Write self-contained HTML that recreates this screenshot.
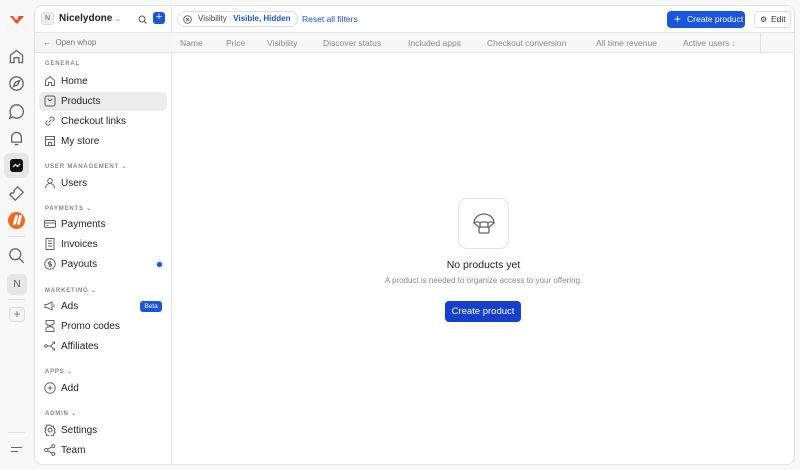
<!DOCTYPE html><html><head><style>
*{box-sizing:border-box;margin:0;padding:0}
body{width:800px;height:470px;background:#f8f8f8;font-family:"Liberation Sans",sans-serif;position:relative;overflow:hidden;color:#222}
.abs{position:absolute}
.rail svg{position:absolute;left:8px}
.panel{position:absolute;left:34px;top:5px;width:761px;height:460px;background:#fff;border:1px solid #e4e4e4;border-radius:8px;overflow:hidden}
.side{position:absolute;left:0;top:0;width:137px;height:100%;border-right:1px solid #e4e4e4}
.sec{position:absolute;left:10px;font-size:6px;letter-spacing:.8px;color:#888;font-weight:bold}
.it{position:absolute;left:4px;width:128px;height:19px;border-radius:5px;font-size:10px;color:#222;line-height:19px;padding-left:22px}
.it svg{position:absolute;left:5px;top:3px}
.col{position:absolute;font-size:8.5px;color:#888}
</style></head><body>
<div class="rail">
<svg style="top:13px;left:8px" width="17" height="12" viewBox="0 0 17 12"><path d="M1 3l4 0 3 4 3-4 5 0-7 8z" fill="#f24a1c"/><path d="M1 3l4 4M6 3l4 4" stroke="#fff" stroke-width="1"/></svg>
<svg style="top:48px" width="17" height="17" viewBox="0 0 14 14" fill="none" stroke="#666" stroke-width="1.1"><path d="M2 6l5-4 5 4v6H9V8H5v4H2z"/></svg>
<svg style="top:75px" width="17" height="17" viewBox="0 0 14 14" fill="none" stroke="#666" stroke-width="1.1"><circle cx="7" cy="7" r="5.5"/><path d="M9.5 4.5L8 8 4.5 9.5 6 6z"/></svg>
<svg style="top:103px" width="17" height="17" viewBox="0 0 14 14" fill="none" stroke="#666" stroke-width="1.1"><path d="M7 1.5a5.5 5.5 0 1 1-3 10L1.5 12.5l1-2.7A5.5 5.5 0 0 1 7 1.5z"/></svg>
<svg style="top:130px" width="17" height="17" viewBox="0 0 14 14" fill="none" stroke="#666" stroke-width="1.1"><path d="M3 10V6a4 4 0 0 1 8 0v4H3zM5.5 12h3"/></svg>
<div class="abs" style="left:4px;top:153px;width:25px;height:25px;border-radius:6px;background:#e6e6e6"></div>
<div class="abs" style="left:10px;top:159px;width:13px;height:13px;border-radius:3px;background:#111"></div>
<svg style="top:161px;left:11px" width="11" height="9"><path d="M2 6l2.5-2.5 2 2L9 3" stroke="#fff" fill="none" stroke-width="1.2"/></svg>
<svg style="top:185px" width="17" height="17" viewBox="0 0 14 14" fill="none" stroke="#666" stroke-width="1.1"><path d="M8 1.5l4.5 4.5-6.5 6.5-4.5-4.5 1.5-1.5a1.5 1.5 0 0 0 2-2z"/></svg>
<div class="abs" style="left:8px;top:212px;width:17px;height:17px;border-radius:50%;background:#f26a1c"></div>
<div class="abs" style="left:14px;top:215px;width:2.5px;height:10px;background:#fff;transform:skew(-15deg);border-radius:1px"></div>
<div class="abs" style="left:18px;top:215px;width:2.5px;height:10px;background:#fff;transform:skew(-15deg);border-radius:1px"></div>
<div class="abs" style="left:8px;top:236px;width:17px;height:1px;background:#e0e0e0"></div>
<svg style="top:247px" width="17" height="17" viewBox="0 0 14 14" fill="none" stroke="#666" stroke-width="1.1"><circle cx="6" cy="6" r="4.5"/><path d="M9.5 9.5L13 13"/></svg>
<div class="abs" style="left:7px;top:274px;width:20px;height:21px;border-radius:5px;background:#e6e6e6;font-size:10px;color:#555;text-align:center;line-height:21px">N</div>
<div class="abs" style="left:8px;top:299px;width:17px;height:1px;background:#e0e0e0"></div>
<div class="abs" style="left:9px;top:307px;width:16px;height:15px;border-radius:4px;border:1px solid #ddd;background:#f4f4f4;font-size:12px;color:#777;text-align:center;line-height:13px">+</div>
<div class="abs" style="left:8px;top:432px;width:17px;height:1px;background:#e0e0e0"></div>
<div class="abs" style="left:11px;top:447px;width:11px;height:1.4px;background:#666"></div>
<div class="abs" style="left:11px;top:451px;width:7px;height:1.4px;background:#666"></div>
</div>

<div class="panel">
<div class="side">
<div class="abs" style="left:6px;top:6px;width:13px;height:13px;border-radius:3px;background:#eee;border:1px solid #ddd;font-size:7px;line-height:11px;text-align:center;color:#555">N</div>
<div class="abs" style="left:24px;top:7px;font-size:10px;font-weight:bold">Nicelydone <span style="font-weight:normal;color:#888;font-size:7px">⌄</span></div>
<svg class="abs" style="left:103px;top:9px" width="9" height="9"><circle cx="4" cy="4" r="3" stroke="#555" fill="none" stroke-width="1"/><path d="M6.2 6.2L8.5 8.5" stroke="#555"/></svg>
<div class="abs" style="left:118px;top:6px;width:12px;height:12px;border-radius:3px;background:#1a56db;color:#fff;font-size:11px;line-height:11px;text-align:center">+</div>
<div class="abs" style="left:0;top:26px;width:137px;height:21px;background:#f5f5f5;border-top:1px solid #e6e6e6;border-bottom:1px solid #e6e6e6;font-size:8px;color:#777;line-height:19px;padding-left:8px">←&nbsp;&nbsp;Open whop</div>
<div class="sec" style="top:55px">GENERAL</div>
<div class="it" style="top:66px"><svg width="12" height="12" fill="none" stroke="#666"><path d="M1.5 5.5L6 1.5l4.5 4v5h-3V7.5h-3v3h-3z"/></svg>Home</div>
<div class="it" style="top:86px;background:#ececec"><svg width="12" height="12" fill="none" stroke="#555"><rect x="1" y="1" width="10" height="10" rx="2"/><path d="M4 3.5a2 2 0 0 0 4 0"/></svg>Products</div>
<div class="it" style="top:106px"><svg width="12" height="12" fill="none" stroke="#666"><path d="M4.5 7.5l3-3M3.5 5.5L2.2 6.8a2.2 2.2 0 0 0 3 3L6.5 8.5M8.5 6.5l1.3-1.3a2.2 2.2 0 0 0-3-3L5.5 3.5"/></svg>Checkout links</div>
<div class="it" style="top:126px"><svg width="12" height="12" fill="none" stroke="#666"><path d="M1.5 1.5h9v9h-9zM1.5 4.5h9M4.5 10.5V7.5h3v3"/></svg>My store</div>
<div class="sec" style="top:157px">USER MANAGEMENT ⌄</div>
<div class="it" style="top:168px"><svg width="12" height="12" fill="none" stroke="#666"><circle cx="6" cy="3.8" r="2.3"/><path d="M1.5 11a4.5 4.5 0 0 1 9 0"/></svg>Users</div>
<div class="sec" style="top:199px">PAYMENTS ⌄</div>
<div class="it" style="top:209px"><svg width="12" height="12" fill="none" stroke="#666"><rect x="0.5" y="2.5" width="11" height="7" rx="1"/><path d="M0.5 5h11M2.5 7.5h2"/></svg>Payments</div>
<div class="it" style="top:229px"><svg width="12" height="12" fill="none" stroke="#666"><rect x="2" y="0.5" width="8" height="11"/><path d="M4 3h4M4 5.5h4M4 8h4"/></svg>Invoices</div>
<div class="it" style="top:249px"><svg width="12" height="12" fill="none" stroke="#666"><circle cx="6" cy="6" r="5.2"/><path d="M7.5 4.2H5.3a1 1 0 0 0 0 2h1.4a1 1 0 0 1 0 2H4.5M6 3v6"/></svg>Payouts<span class="abs" style="left:118px;top:7px;width:5px;height:5px;border-radius:50%;background:#1a56db;box-shadow:0 0 0 1.5px #dbe5fb"></span></div>
<div class="sec" style="top:281px">MARKETING ⌄</div>
<div class="it" style="top:291px"><svg width="12" height="12" fill="none" stroke="#666"><path d="M1 4.5h2l5-2.5v8L3 7.5H1zM10 4.5v3"/></svg>Ads<span class="abs" style="left:101px;top:4px;width:22px;height:11px;border-radius:3px;background:#1a56db;color:#fff;font-size:6.5px;line-height:11px;text-align:center">Beta</span></div>
<div class="it" style="top:311px"><svg width="12" height="12" fill="none" stroke="#666"><path d="M2 .5h8v3.5a2 2 0 0 0 0 4v3.5H2V8a2 2 0 0 0 0-4z"/><path d="M4.5 4.5l3 3M7.5 4.5l-3 3"/></svg>Promo codes</div>
<div class="it" style="top:331px"><svg width="12" height="12" fill="none" stroke="#666"><circle cx="2" cy="6" r="1.3"/><path d="M3.3 6H6.5l3-3M6.5 6l3 3M8.5 2h2v2M8.5 10h2V8"/></svg>Affiliates</div>
<div class="sec" style="top:362px">APPS ⌄</div>
<div class="it" style="top:373px"><svg width="12" height="12" fill="none" stroke="#666"><circle cx="6" cy="6" r="5.2"/><path d="M6 3.5v5M3.5 6h5"/></svg>Add</div>
<div class="sec" style="top:404px">ADMIN ⌄</div>
<div class="it" style="top:415px"><svg width="12" height="12" viewBox="0 0 11 11" fill="none" stroke="#666"><circle cx="5.5" cy="5.5" r="1.8"/><path d="M5.5 .8l1.3 1.2 1.8-.2.3 1.8 1.3 1.2-.9 1.5.9 1.5-1.3 1.2-.3 1.8-1.8-.2-1.3 1.2-1.3-1.2-1.8.2-.3-1.8L.8 7l.9-1.5-.9-1.5 1.3-1.2.3-1.8 1.8.2z"/></svg>Settings</div>
<div class="it" style="top:435px"><svg width="12" height="12" fill="none" stroke="#666"><circle cx="2.2" cy="6" r="1.6"/><circle cx="9.3" cy="2.2" r="1.6"/><circle cx="9.3" cy="9.8" r="1.6"/><path d="M3.6 5.2L7.9 3M3.6 6.8l4.3 2.2"/></svg>Team</div>
</div>

<div class="abs" style="left:142px;top:5px;width:121px;height:16px;border:1px solid #ddd;border-radius:9px;font-size:8px;line-height:14px;padding-left:20px;color:#444">Visibility <span style="color:#ccc">|</span> <span style="color:#1a56db;font-weight:bold">Visible, Hidden</span> <span style="color:#888;font-size:6px">⌄</span>
<svg class="abs" style="left:5px;top:3px" width="9" height="9" fill="none" stroke="#666"><circle cx="4.5" cy="4.5" r="3.8"/><path d="M3 3l3 3M6 3L3 6"/></svg></div>
<div class="abs" style="left:267px;top:8px;font-size:8.5px;color:#1a56db">Reset all filters</div>
<div class="abs" style="left:632px;top:5px;width:78px;height:17px;border-radius:4px;background:#1a56db;color:#fff;font-size:8.5px;line-height:17px;padding-left:20px"><span class="abs" style="left:7px;top:0;font-size:12px">+</span>Create product</div>
<div class="abs" style="left:719px;top:5px;width:37px;height:17px;border-radius:4px;border:1px solid #ddd;font-size:8.5px;line-height:15px;padding-left:16px;color:#333"><span class="abs" style="left:5px;top:0;font-size:8px">⚙</span>Edit</div>

<div class="abs" style="left:137px;top:26px;width:624px;height:21px;background:#f7f7f7;border-top:1px solid #e6e6e6;border-bottom:1px solid #e6e6e6"></div>
<div class="abs" style="left:725px;top:26px;width:1px;height:21px;background:#e2e2e2"></div>
<div class="col" style="left:145px;top:32px">Name</div>
<div class="col" style="left:191px;top:32px">Price</div>
<div class="col" style="left:232px;top:32px">Visibility</div>
<div class="col" style="left:288px;top:32px">Discover status</div>
<div class="col" style="left:373px;top:32px">Included apps</div>
<div class="col" style="left:452px;top:32px">Checkout conversion</div>
<div class="col" style="left:561px;top:32px">All time revenue</div>
<div class="col" style="left:648px;top:32px">Active users ↓</div>

<div class="abs" style="left:423px;top:192px;width:51px;height:51px;border:1px solid #e2e2e2;border-radius:9px;background:#fff"></div>
<svg class="abs" style="left:436px;top:204px" width="26" height="26" viewBox="0 0 26 26" fill="none" stroke="#666" stroke-width="1.3"><path d="M3 13a10 9 0 0 1 20 0c-2-1.5-4-1.5-6 0-1.5-1.5-6.5-1.5-8 0-2-1.5-4-1.5-6 0zM3 13l6 5M23 13l-6 5M9 13l0 5M17 13v5"/><rect x="8" y="17" width="10" height="6" rx="1"/></svg>
<div class="abs" style="left:0;width:897px;top:253px;text-align:center;font-size:10.5px;color:#222">No products yet</div>
<div class="abs" style="left:0;width:897px;top:270px;text-align:center;font-size:8px;color:#888">A product is needed to organize access to your offering.</div>
<div class="abs" style="left:410px;top:295px;width:76px;height:21px;border-radius:4px;background:#1440cc;color:#fff;font-size:9.5px;line-height:21px;text-align:center">Create product</div>
</div>
</body></html>
